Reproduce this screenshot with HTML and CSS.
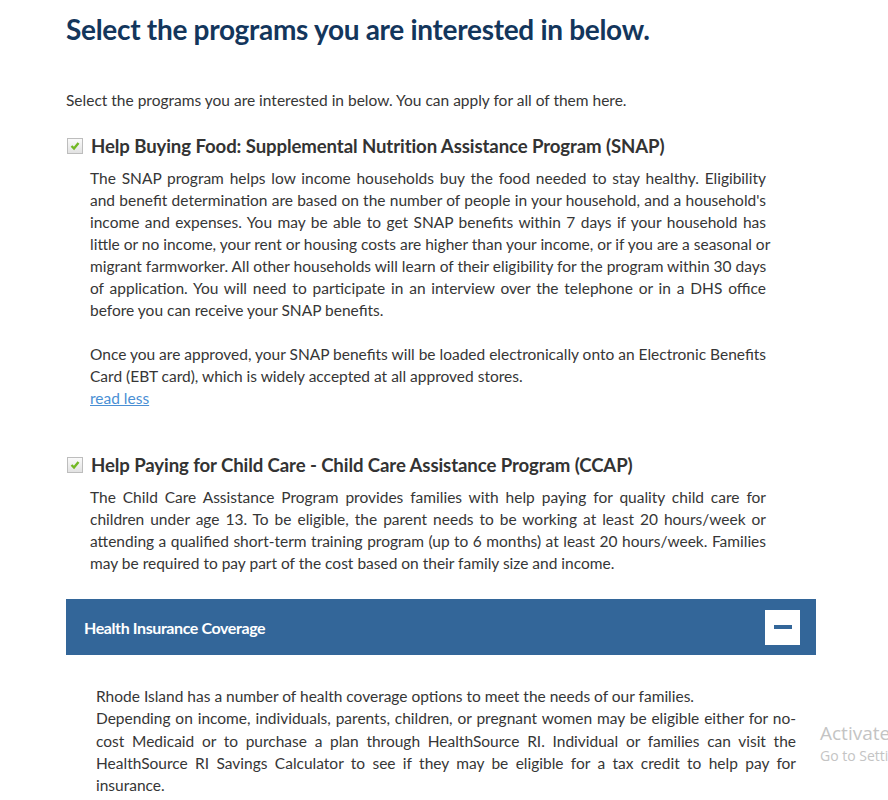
FILE: index.html
```html
<!DOCTYPE html>
<html>
<head>
<meta charset="utf-8">
<link rel="stylesheet" href="styles.css">
</head>
<body>
<div class="page">
  <h1 class="title">Select the programs you are interested in below.</h1>
  <p class="intro">Select the programs you are interested in below. You can apply for all of them here.</p>

  <div class="program">
    <div class="program-head">
      <span class="check"><svg width="14" height="14" viewBox="0 0 14 14"><path d="M3.5 7 L6 9.5 L10.5 4" fill="none" stroke="#72b824" stroke-width="2.4"/></svg></span>
      <span class="program-title">Help Buying Food: Supplemental Nutrition Assistance Program (SNAP)</span>
    </div>
    <div class="program-body">
      <p>
        <span class="ln">The SNAP program helps low income households buy the food needed to stay healthy. Eligibility</span>
        <span class="ln">and benefit determination are based on the number of people in your household, and a household's</span>
        <span class="ln">income and expenses. You may be able to get SNAP benefits within 7 days if your household has</span>
        <span class="ln">little or no income, your rent or housing costs are higher than your income, or if you are a seasonal or</span>
        <span class="ln">migrant farmworker. All other households will learn of their eligibility for the program within 30 days</span>
        <span class="ln">of application. You will need to participate in an interview over the telephone or in a DHS office</span>
        <span class="ln end">before you can receive your SNAP benefits.</span>
      </p>
      <p class="gap">
        <span class="ln">Once you are approved, your SNAP benefits will be loaded electronically onto an Electronic Benefits</span>
        <span class="ln end">Card (EBT card), which is widely accepted at all approved stores.</span>
        <a href="#" class="more">read less</a>
      </p>
    </div>
  </div>

  <div class="program second">
    <div class="program-head">
      <span class="check"><svg width="14" height="14" viewBox="0 0 14 14"><path d="M3.5 7 L6 9.5 L10.5 4" fill="none" stroke="#72b824" stroke-width="2.4"/></svg></span>
      <span class="program-title">Help Paying for Child Care - Child Care Assistance Program (CCAP)</span>
    </div>
    <div class="program-body">
      <p>
        <span class="ln">The Child Care Assistance Program provides families with help paying for quality child care for</span>
        <span class="ln">children under age 13. To be eligible, the parent needs to be working at least 20 hours/week or</span>
        <span class="ln">attending a qualified short-term training program (up to 6 months) at least 20 hours/week. Families</span>
        <span class="ln end">may be required to pay part of the cost based on their family size and income.</span>
      </p>
    </div>
  </div>

  <div class="bar">
    <span class="bar-title">Health Insurance Coverage</span>
    <span class="toggle"><span class="minus"></span></span>
  </div>
  <div class="health">
    <p>
      <span class="ln end">Rhode Island has a number of health coverage options to meet the needs of our families.</span>
      <span class="ln">Depending on income, individuals, parents, children, or pregnant women may be eligible either for no-</span>
      <span class="ln">cost Medicaid or to purchase a plan through HealthSource RI. Individual or families can visit the</span>
      <span class="ln">HealthSource RI Savings Calculator to see if they may be eligible for a tax credit to help pay for</span>
      <span class="ln end">insurance.</span>
    </p>
  </div>
</div>
<div class="watermark">
  <div class="wm-big">Activate Windows</div>
  <div class="wm-small">Go to Settings to activate Windows.</div>
</div>
</body>
</html>
```

FILE: styles.css
```css
html, body {
  margin: 0;
  padding: 0;
  background: #fff;
  overflow: hidden;
}
body {
  font-family: Lato, "Open Sans", sans-serif;
  color: #363636;
}
.page {
  width: 750px;
  padding: 11px 0 0 66px;
}
.title {
  margin: 0;
  font-size: 28px;
  line-height: 36px;
  font-weight: 700;
  color: #13365c;
  letter-spacing: -0.3px;
}
.intro {
  margin: 42px 0 0;
  font-size: 15.5px;
  line-height: 22px;
}
.program {
  margin-top: 23px;
}
.program.second {
  margin-top: 44px;
}
.program-head {
  display: flex;
  align-items: center;
  gap: 8px;
  height: 24px;
}
.check {
  width: 16px;
  height: 16px;
  box-sizing: border-box;
  border: 1px solid #bdbdbd;
  background: linear-gradient(#fafafa, #e2e2e2);
  display: flex;
  margin-left: 1px;
}
.program-title {
  font-size: 18.6px;
  font-weight: 700;
  color: #333;
  letter-spacing: -0.1px;
}
.program-body {
  padding: 9px 50px 0 24px;
}
.program-body p {
  margin: 0;
  font-size: 15.5px;
  line-height: 22px;
}
.ln {
  display: block;
  text-align: justify;
  text-align-last: justify;
  white-space: nowrap;
}
.ln.end {
  text-align-last: left;
}
.program-body p.gap {
  margin-top: 22px;
}
.more {
  display: block;
  color: #4a8fd4;
  text-decoration: underline;
}
.bar {
  margin-top: 25px;
  height: 56px;
  background: #336699;
  display: flex;
  align-items: center;
  justify-content: space-between;
  padding: 0 16px 0 18px;
}
.bar-title {
  color: #fff;
  font-size: 16px;
  font-weight: 700;
  letter-spacing: -0.4px;
}
.toggle {
  width: 35px;
  height: 35px;
  background: #fff;
  display: flex;
  align-items: center;
  justify-content: center;
}
.minus {
  width: 18px;
  height: 4px;
  background: #336699;
}
.health {
  padding: 30px 20px 0 30px;
}
.health p {
  margin: 0;
  font-size: 15.5px;
  line-height: 22.3px;
}
.watermark {
  position: absolute;
  left: 820px;
  top: 720px;
  white-space: nowrap;
  color: #c4c4c4;
  font-family: "Open Sans", sans-serif;
}
.wm-big {
  font-size: 19px;
  line-height: 26px;
}
.wm-small {
  font-size: 14px;
  line-height: 20px;
}
```
